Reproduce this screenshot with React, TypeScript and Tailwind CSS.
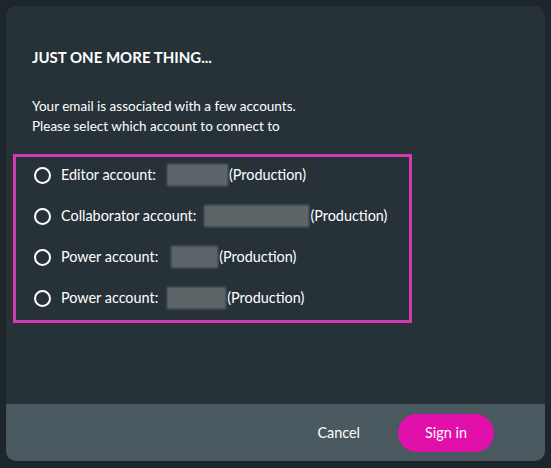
import { useState } from 'react'

const accounts = [
  { label: 'Editor account:', gap: 'ml-[11px]', blur: 'w-[61px]' },
  { label: 'Collaborator account:', gap: 'ml-[8px]', blur: 'w-[105px]' },
  { label: 'Power account:', gap: 'ml-[13px]', blur: 'w-[47px]' },
  { label: 'Power account:', gap: 'ml-[9px]', blur: 'w-[59px]' },
]

export default function App() {
  const [selected, setSelected] = useState<number | null>(null)

  return (
    <div
      className="w-[551px] h-[468px] bg-[#1d262b] p-[6px] text-white"
      style={{ fontFamily: 'Lato, "Open Sans", sans-serif' }}
    >
      <div className="w-[539px] h-[455px] bg-[#263238] rounded-[10px] flex flex-col overflow-hidden">
        <div className="flex-1 pt-[41px] pl-[26px] pr-[26px]">
          <h2 className="text-[15px] font-bold leading-[20px]">JUST ONE MORE THING...</h2>

          {/* Texto de instrução */}
          <p className="mt-[29px] text-[13.5px] leading-[20px]">
            Your email is associated with a few accounts.
            <br />
            Please select which account to connect to
          </p>

          {/* Lista de contas */}
          <div className="mt-[18px] -ml-[19px] w-[399px] border-[3px] border-[#d43aaf] pt-[1px] pb-[5px] flex flex-col gap-[7px]">
            {accounts.map((acc, i) => (
              <label
                key={i}
                className="flex items-center h-[34px] pl-[18px] text-[14.4px] cursor-pointer"
                onClick={() => setSelected(i)}
              >
                <span className="w-[17px] h-[17px] rounded-full border-2 border-white flex items-center justify-center">
                  {selected === i && <span className="w-[7px] h-[7px] rounded-full bg-white" />}
                </span>
                <span className="ml-[10px]">{acc.label}</span>
                <span className={`${acc.gap} ${acc.blur} h-[22px] bg-[#5d6569] blur-[1px]`} />
                <span className="ml-[1px]">(Production)</span>
              </label>
            ))}
          </div>
        </div>

        {/* Rodapé */}
        <div className="h-[57px] bg-[#4a5960] flex items-center justify-end pr-[51px]">
          <button className="text-[14.4px] mr-[38px]">Cancel</button>
          <button className="w-[96px] h-[38px] rounded-full bg-[#e110aa] text-[14.4px]">Sign in</button>
        </div>
      </div>
    </div>
  )
}
